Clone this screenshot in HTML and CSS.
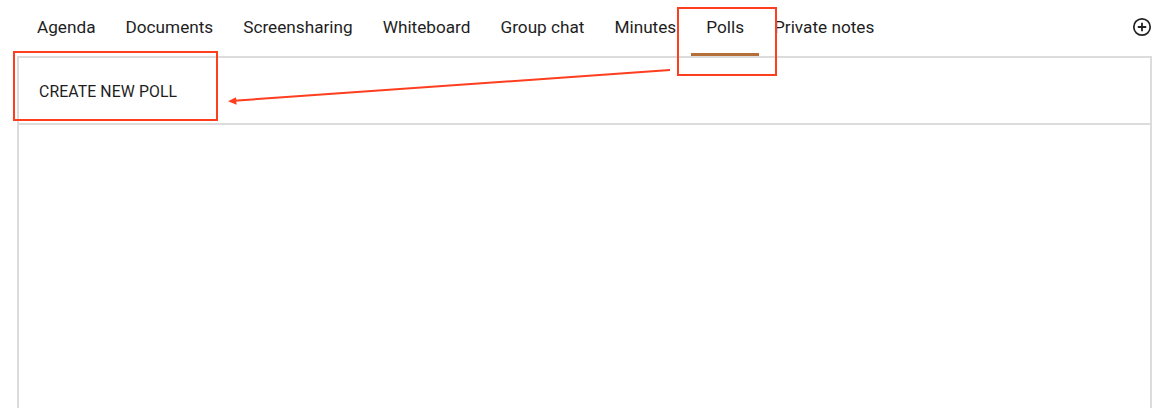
FILE: index.html
```html
<!DOCTYPE html>
<html>
<head>
<meta charset="utf-8">
<link rel="stylesheet" href="styles.css">
</head>
<body>
<div class="page">
  <div class="tabbar">
    <nav class="tabs">
      <div class="tab">Agenda</div>
      <div class="tab">Documents</div>
      <div class="tab">Screensharing</div>
      <div class="tab">Whiteboard</div>
      <div class="tab">Group chat</div>
      <div class="tab">Minutes</div>
      <div class="tab active">Polls</div>
      <div class="tab">Private notes</div>
    </nav>
    <button class="add-btn" aria-label="Add">
      <svg width="20" height="20" viewBox="0 0 20 20"><circle cx="10" cy="10" r="8.2" fill="none" stroke="#222" stroke-width="1.7"/><path d="M10 5.8v8.4M5.8 10h8.4" stroke="#222" stroke-width="1.8"/></svg>
    </button>
  </div>
  <div class="panel">
    <div class="panel-head">
      <button class="create-btn">CREATE NEW POLL</button>
    </div>
    <div class="panel-body"></div>
  </div>
  <svg class="annotations" width="1170" height="408" viewBox="0 0 1170 408">
    <rect x="678" y="8" width="98" height="67" fill="none" stroke="#ff3d1f" stroke-width="2"/>
    <rect x="14" y="52" width="203" height="68" fill="none" stroke="#ff3d1f" stroke-width="2"/>
    <line x1="670" y1="70" x2="234" y2="100.7" stroke="#ff3d1f" stroke-width="2"/>
    <polygon points="228,101.2 236,97.2 236.6,104.8" fill="#ff3d1f"/>
  </svg>
</div>
</body>
</html>
```
FILE: styles.css
```css
html, body {
  margin: 0;
  padding: 0;
  background: #ffffff;
}
body {
  font-family: Roboto, "Noto Sans", "Liberation Sans", sans-serif;
  color: #1e1e1e;
}
.page {
  position: relative;
  width: 1170px;
  height: 408px;
  overflow: hidden;
}
.tabbar {
  display: flex;
  align-items: flex-start;
  justify-content: space-between;
  height: 56px;
  padding-left: 22px;
  padding-right: 18px;
}
.tabs {
  display: flex;
}
.tab {
  position: relative;
  padding: 0 15px;
  height: 56px;
  line-height: 55px;
  font-size: 17.2px;
  color: #1e1e1e;
  white-space: nowrap;
}
.tab.active::after {
  content: "";
  position: absolute;
  left: 0;
  right: 0;
  bottom: 0;
  height: 3px;
  background: #b5703a;
}
.add-btn {
  margin-top: 17px;
  width: 20px;
  height: 20px;
  padding: 0;
  border: 0;
  background: none;
  display: flex;
}
.panel {
  margin-left: 17px;
  width: 1131px;
  border: 2px solid #dcdcdc;
  border-bottom: 0;
  height: 352px;
  display: flex;
  flex-direction: column;
}
.panel-head {
  height: 65px;
  border-bottom: 2px solid #dcdcdc;
  display: flex;
  align-items: center;
  padding-left: 20px;
}
.create-btn {
  border: 0;
  background: none;
  padding: 0;
  font-family: Roboto, "Noto Sans", "Liberation Sans", sans-serif;
  font-size: 15.8px;
  color: #1e1e1e;
  letter-spacing: 0.1px;
  margin-top: 2px;
}
.panel-body {
  flex: 1;
}
.annotations {
  position: absolute;
  left: 0;
  top: 0;
  pointer-events: none;
}
```
